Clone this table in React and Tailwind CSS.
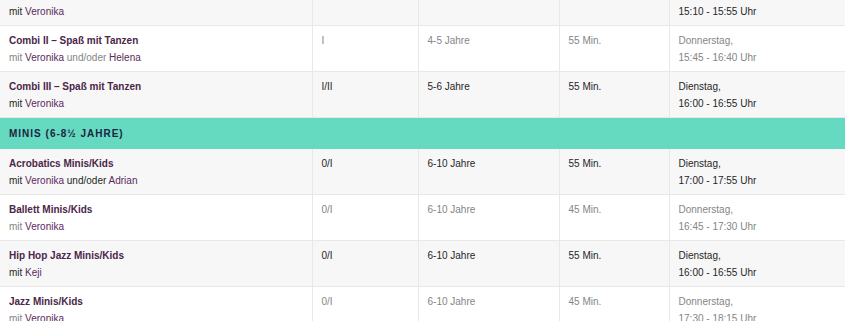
import React from 'react';

const rows = [
  { title: 'Combi I – Spaß mit Tanzen', teachers: ['Veronika'], level: 'I', age: '3-4 Jahre', dur: '45 Min.', day: 'Dienstag,', time: '15:10 - 15:55 Uhr' },
  { title: 'Combi II – Spaß mit Tanzen', teachers: ['Veronika', 'Helena'], level: 'I', age: '4-5 Jahre', dur: '55 Min.', day: 'Donnerstag,', time: '15:45 - 16:40 Uhr' },
  { title: 'Combi III – Spaß mit Tanzen', teachers: ['Veronika'], level: 'I/II', age: '5-6 Jahre', dur: '55 Min.', day: 'Dienstag,', time: '16:00 - 16:55 Uhr' },
  { header: 'Minis (6-8½ Jahre)' },
  { title: 'Acrobatics Minis/Kids', teachers: ['Veronika', 'Adrian'], level: '0/I', age: '6-10 Jahre', dur: '55 Min.', day: 'Dienstag,', time: '17:00 - 17:55 Uhr' },
  { title: 'Ballett Minis/Kids', teachers: ['Veronika'], level: '0/I', age: '6-10 Jahre', dur: '45 Min.', day: 'Donnerstag,', time: '16:45 - 17:30 Uhr' },
  { title: 'Hip Hop Jazz Minis/Kids', teachers: ['Keji'], level: '0/I', age: '6-10 Jahre', dur: '55 Min.', day: 'Dienstag,', time: '16:00 - 16:55 Uhr' },
  { title: 'Jazz Minis/Kids', teachers: ['Veronika'], level: '0/I', age: '6-10 Jahre', dur: '45 Min.', day: 'Donnerstag,', time: '17:30 - 18:15 Uhr' },
];

const Teachers = ({ names }) => (
  <span>
    mit <span className="text-[#5a2a5c]">{names[0]}</span>
    {names[1] && (
      <>
        {' '}und/oder <span className="text-[#5a2a5c]">{names[1]}</span>
      </>
    )}
  </span>
);

export default function App() {
  let stripe = 0;
  return (
    <div className="w-[845px] h-[321px] overflow-hidden bg-white font-['Liberation_Sans',Arial,sans-serif] text-[10px] leading-[17px]">
      <table className="-mt-[20px] w-[900px] table-fixed border-collapse">
        <colgroup>
          <col className="w-[312px]" />
          <col className="w-[106px]" />
          <col className="w-[141px]" />
          <col className="w-[110px]" />
          <col className="w-[231px]" />
        </colgroup>
        <tbody>
          {rows.map((r, i) => {
            if (r.header) {
              stripe = 0;
              return (
                <tr key={i} className="bg-[#66d9c1]">
                  <td colSpan={5} className="h-[31px] px-[9px] py-0 text-[10px] font-bold uppercase tracking-[0.1em] text-[#1d2340]">
                    {r.header}
                  </td>
                </tr>
              );
            }
            const grey = stripe % 2 === 0;
            stripe++;
            const rowCls = grey ? 'bg-[#f7f7f7] text-[#262626]' : 'bg-white text-[#858585]';
            const cell = 'align-top px-[9px] pt-[6px] pb-[5px] border-b border-r border-[#e8e8e8]';
            return (
              <tr key={i} className={rowCls}>
                <td className={cell}>
                  <div className="font-bold text-[#4a2649]">{r.title}</div>
                  <Teachers names={r.teachers} />
                </td>
                <td className={cell}>{r.level}</td>
                <td className={cell}>{r.age}</td>
                <td className={cell}>{r.dur}</td>
                <td className={cell}>
                  <div>{r.day}</div>
                  <div>{r.time}</div>
                </td>
              </tr>
            );
          })}
        </tbody>
      </table>
    </div>
  );
}
